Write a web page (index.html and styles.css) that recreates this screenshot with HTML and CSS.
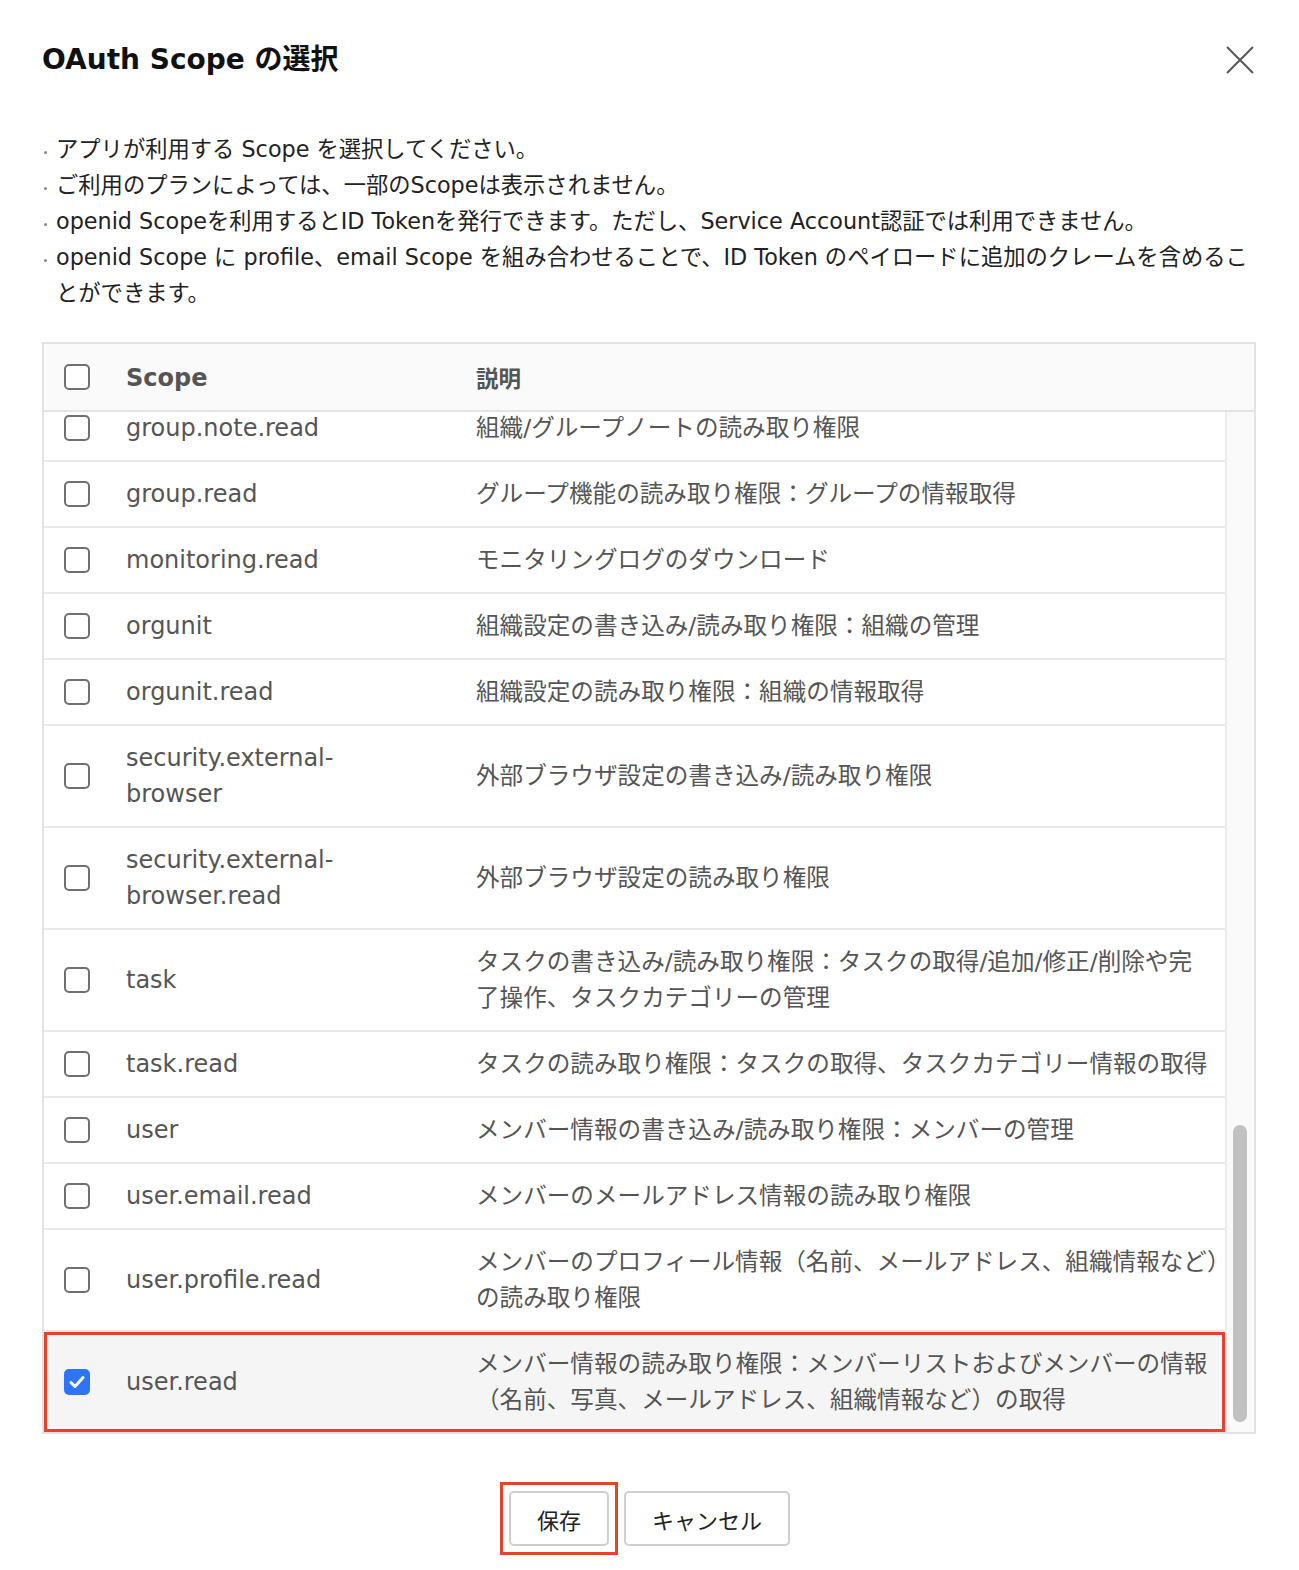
FILE: index.html
```html
<!DOCTYPE html>
<html lang="ja">
<head>
<meta charset="utf-8">
<title>OAuth Scope の選択</title>
<link rel="stylesheet" href="styles.css">
</head>
<body>
<div class="dialog">
  <div class="dialog-head">
    <h1 class="title">OAuth Scope の選択</h1>
    <button class="close" aria-label="閉じる">
      <svg width="28" height="28" viewBox="0 0 28 28"><path d="M1 1 L27 27 M27 1 L1 27" stroke="#555" stroke-width="2" fill="none"/></svg>
    </button>
  </div>

  <ul class="notes">
    <li>アプリが利用する Scope を選択してください。</li>
    <li>ご利用のプランによっては、一部のScopeは表示されません。</li>
    <li>openid Scopeを利用するとID Tokenを発行できます。ただし、Service Account認証では利用できません。</li>
    <li>openid Scope に profile、email Scope を組み合わせることで、ID Token のペイロードに追加のクレームを含めることができます。</li>
  </ul>

  <div class="table">
    <div class="thead">
      <div class="cell-check"><span class="cb"></span></div>
      <div class="cell-scope">Scope</div>
      <div class="cell-desc">説明</div>
    </div>
    <div class="tbody">
      <div class="rows">
        <div class="rows-inner">
          <div class="row"><div class="cell-check"><span class="cb"></span></div><div class="cell-scope">group.note.read</div><div class="cell-desc">組織/グループノートの読み取り権限</div></div>
          <div class="row"><div class="cell-check"><span class="cb"></span></div><div class="cell-scope">group.read</div><div class="cell-desc">グループ機能の読み取り権限：グループの情報取得</div></div>
          <div class="row"><div class="cell-check"><span class="cb"></span></div><div class="cell-scope">monitoring.read</div><div class="cell-desc">モニタリングログのダウンロード</div></div>
          <div class="row"><div class="cell-check"><span class="cb"></span></div><div class="cell-scope">orgunit</div><div class="cell-desc">組織設定の書き込み/読み取り権限：組織の管理</div></div>
          <div class="row"><div class="cell-check"><span class="cb"></span></div><div class="cell-scope">orgunit.read</div><div class="cell-desc">組織設定の読み取り権限：組織の情報取得</div></div>
          <div class="row"><div class="cell-check"><span class="cb"></span></div><div class="cell-scope">security.external-<br>browser</div><div class="cell-desc">外部ブラウザ設定の書き込み/読み取り権限</div></div>
          <div class="row"><div class="cell-check"><span class="cb"></span></div><div class="cell-scope">security.external-<br>browser.read</div><div class="cell-desc">外部ブラウザ設定の読み取り権限</div></div>
          <div class="row"><div class="cell-check"><span class="cb"></span></div><div class="cell-scope">task</div><div class="cell-desc">タスクの書き込み/読み取り権限：タスクの取得/追加/修正/削除や完<br>了操作、タスクカテゴリーの管理</div></div>
          <div class="row"><div class="cell-check"><span class="cb"></span></div><div class="cell-scope">task.read</div><div class="cell-desc">タスクの読み取り権限：タスクの取得、タスクカテゴリー情報の取得</div></div>
          <div class="row"><div class="cell-check"><span class="cb"></span></div><div class="cell-scope">user</div><div class="cell-desc">メンバー情報の書き込み/読み取り権限：メンバーの管理</div></div>
          <div class="row"><div class="cell-check"><span class="cb"></span></div><div class="cell-scope">user.email.read</div><div class="cell-desc">メンバーのメールアドレス情報の読み取り権限</div></div>
          <div class="row"><div class="cell-check"><span class="cb"></span></div><div class="cell-scope">user.profile.read</div><div class="cell-desc">メンバーのプロフィール情報（名前、メールアドレス、組織情報など）の読み取り権限</div></div>
          <div class="row selected"><div class="cell-check"><span class="cb checked"><svg width="18" height="18" viewBox="0 0 18 18"><path d="M3 9.5 L7 13.5 L15 4.5" stroke="#fff" stroke-width="3" fill="none" stroke-linecap="round" stroke-linejoin="round"/></svg></span></div><div class="cell-scope">user.read</div><div class="cell-desc">メンバー情報の読み取り権限：メンバーリストおよびメンバーの情報（名前、写真、メールアドレス、組織情報など）の取得</div></div>
        </div>
      </div>
      <div class="scrollbar"><div class="thumb"></div></div>
    </div>
  </div>

  <div class="actions">
    <span class="highlight"><button class="btn">保存</button></span>
    <button class="btn">キャンセル</button>
  </div>
</div>
</body>
</html>
```

FILE: styles.css
```css
* { box-sizing: border-box; }
html, body { margin: 0; padding: 0; background: #fff; }
body {
  font-family: "DejaVu Sans", "Noto Sans CJK JP", sans-serif;
  color: #222;
}
.dialog {
  width: 1299px;
  padding: 40px 43px 0 42px;
}
.dialog-head {
  display: flex;
  justify-content: space-between;
  align-items: center;
  height: 40px;
}
.title {
  margin: 0;
  font-size: 28px;
  font-weight: bold;
  color: #111;
  line-height: 40px;
}
.close {
  border: 0;
  background: none;
  padding: 0;
  width: 28px;
  height: 28px;
  margin-right: 2px;
  display: flex;
}
.notes {
  list-style: none;
  margin: 51px 0 0 0;
  padding: 0;
  font-size: 22.3px;
  line-height: 36px;
  color: #222;
}
.notes li {
  position: relative;
  padding-left: 14px;
}
.notes li::before {
  content: "";
  position: absolute;
  left: 2px;
  top: 20px;
  width: 3px;
  height: 3px;
  border-radius: 50%;
  background: #888;
}
.table {
  margin-top: 31px;
  border: 2px solid #e3e3e3;
  width: 1214px;
}
.thead {
  display: flex;
  align-items: center;
  height: 68px;
  background: #fafafa;
  border-bottom: 2px solid #e3e3e3;
  font-weight: bold;
  color: #666;
}
.thead .cell-scope { font-size: 24px; padding-top: 2px; }
.thead .cell-desc { font-size: 22.5px; }
.cell-check {
  width: 82px;
  flex: none;
  padding-left: 20px;
  display: flex;
  align-items: center;
}
.cell-scope {
  width: 350px;
  flex: none;
  padding-right: 20px;
  font-size: 24px;
  color: #555;
}
.cell-desc {
  flex: 1;
  padding-right: 0;
  font-size: 23.6px;
  color: #555;
}
.cb {
  width: 26px;
  height: 26px;
  border: 2px solid #707070;
  border-radius: 5px;
  background: #fff;
  display: flex;
  align-items: center;
  justify-content: center;
}
.cb.checked {
  background: #2f74f5;
  border-color: #2f74f5;
}
.tbody {
  display: flex;
  height: 1020px;
}
.rows {
  flex: 1;
  overflow: hidden;
  display: flex;
  flex-direction: column;
  justify-content: flex-end;
}
.rows-inner { flex: none; }
.row {
  display: flex;
  align-items: center;
  padding: 14px 0;
  line-height: 36px;
  border-bottom: 2px solid #e8e8e8;
}
.row:last-child { border-bottom: 0; }
.row.selected {
  background: #f5f5f5;
  outline: 3px solid #e5432b;
  outline-offset: -3px;
}
.scrollbar {
  width: 29px;
  flex: none;
  background: #fafafa;
  border-left: 2px solid #ececec;
  display: flex;
  flex-direction: column;
  justify-content: flex-end;
  align-items: flex-start;
  padding: 0 0 10px 6px;
}
.thumb {
  width: 14px;
  height: 297px;
  border-radius: 7px;
  background: #c1c1c1;
}
.actions {
  display: flex;
  justify-content: center;
  align-items: center;
  gap: 6px;
  margin-top: 48px;
  padding-left: 1px;
}
.highlight {
  display: flex;
  padding: 6px;
  border: 3px solid #e5432b;
  margin-left: -9px;
}
.btn {
  height: 55px;
  padding: 0 26px;
  border: 2px solid #cfcfcf;
  border-radius: 5px;
  background: #fff;
  font-family: "DejaVu Sans", "Noto Sans CJK JP", sans-serif;
  font-size: 22px;
  color: #222;
}
```
